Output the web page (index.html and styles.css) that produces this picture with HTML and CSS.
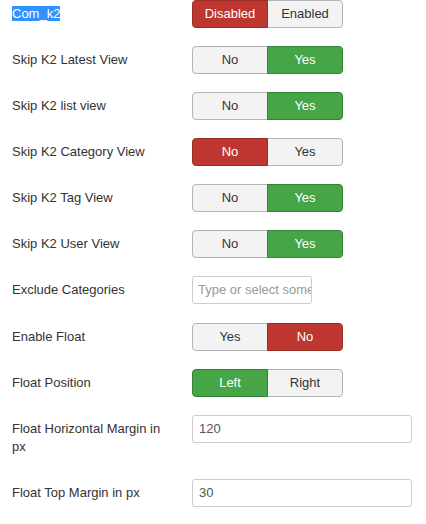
FILE: index.html
```html
<!DOCTYPE html>
<html>
<head>
<meta charset="utf-8">
<link rel="stylesheet" href="styles.css">
</head>
<body>
<div class="form">
  <div class="row">
    <label class="label"><span class="selected">Com_k2</span></label>
    <div class="controls">
      <div class="toggle"><span class="btn btn-danger">Disabled</span><span class="btn">Enabled</span></div>
    </div>
  </div>
  <div class="row">
    <label class="label">Skip K2 Latest View</label>
    <div class="controls">
      <div class="toggle"><span class="btn">No</span><span class="btn btn-success">Yes</span></div>
    </div>
  </div>
  <div class="row">
    <label class="label">Skip K2 list view</label>
    <div class="controls">
      <div class="toggle"><span class="btn">No</span><span class="btn btn-success">Yes</span></div>
    </div>
  </div>
  <div class="row">
    <label class="label">Skip K2 Category View</label>
    <div class="controls">
      <div class="toggle"><span class="btn btn-danger">No</span><span class="btn">Yes</span></div>
    </div>
  </div>
  <div class="row">
    <label class="label">Skip K2 Tag View</label>
    <div class="controls">
      <div class="toggle"><span class="btn">No</span><span class="btn btn-success">Yes</span></div>
    </div>
  </div>
  <div class="row">
    <label class="label">Skip K2 User View</label>
    <div class="controls">
      <div class="toggle"><span class="btn">No</span><span class="btn btn-success">Yes</span></div>
    </div>
  </div>
  <div class="row row-chosen">
    <label class="label">Exclude Categories</label>
    <div class="controls">
      <div class="chosen"><span class="placeholder">Type or select some options</span></div>
    </div>
  </div>
  <div class="row">
    <label class="label">Enable Float</label>
    <div class="controls">
      <div class="toggle"><span class="btn">Yes</span><span class="btn btn-danger">No</span></div>
    </div>
  </div>
  <div class="row">
    <label class="label">Float Position</label>
    <div class="controls">
      <div class="toggle"><span class="btn btn-success">Left</span><span class="btn">Right</span></div>
    </div>
  </div>
  <div class="row">
    <label class="label">Float Horizontal Margin in px</label>
    <div class="controls">
      <div class="input">120</div>
    </div>
  </div>
  <div class="row">
    <label class="label">Float Top Margin in px</label>
    <div class="controls">
      <div class="input">30</div>
    </div>
  </div>
</div>
</body>
</html>
```

FILE: styles.css
```css
html, body {
  margin: 0;
  padding: 0;
  background: #fff;
}
body {
  font-family: "Liberation Sans", Arial, sans-serif;
  font-size: 13px;
  line-height: 18px;
  color: #333;
}
.form {
  padding-left: 12px;
}
.row {
  display: flex;
  align-items: flex-start;
  margin-bottom: 18px;
}
.row-chosen {
  margin-bottom: 19px;
}
.label {
  width: 160px;
  margin-right: 20px;
  padding: 5px 0;
  flex: none;
}
.selected {
  background: #3390ff;
  color: #fff;
}
.controls {
  flex: none;
}
.toggle {
  display: flex;
}
.btn {
  box-sizing: border-box;
  width: 76px;
  height: 28px;
  padding: 4px 0;
  text-align: center;
  background: #f3f3f3;
  border: 1px solid #b3b3b3;
  color: #333;
}
.btn:first-child {
  border-radius: 4px 0 0 4px;
}
.btn + .btn {
  margin-left: -1px;
  border-radius: 0 4px 4px 0;
}
.btn-danger {
  background: #bd362f;
  border-color: #9b2c27;
  color: #fff;
  position: relative;
}
.btn-success {
  background: #46a546;
  border-color: #378137;
  color: #fff;
  position: relative;
}
.chosen {
  box-sizing: border-box;
  width: 120px;
  height: 28px;
  padding: 4px 5px;
  border: 1px solid #ccc;
  border-radius: 3px;
  overflow: hidden;
  white-space: nowrap;
}
.placeholder {
  color: #999;
}
.input {
  box-sizing: border-box;
  width: 220px;
  height: 28px;
  padding: 4px 6px;
  border: 1px solid #ccc;
  border-radius: 3px;
  color: #555;
}
```
